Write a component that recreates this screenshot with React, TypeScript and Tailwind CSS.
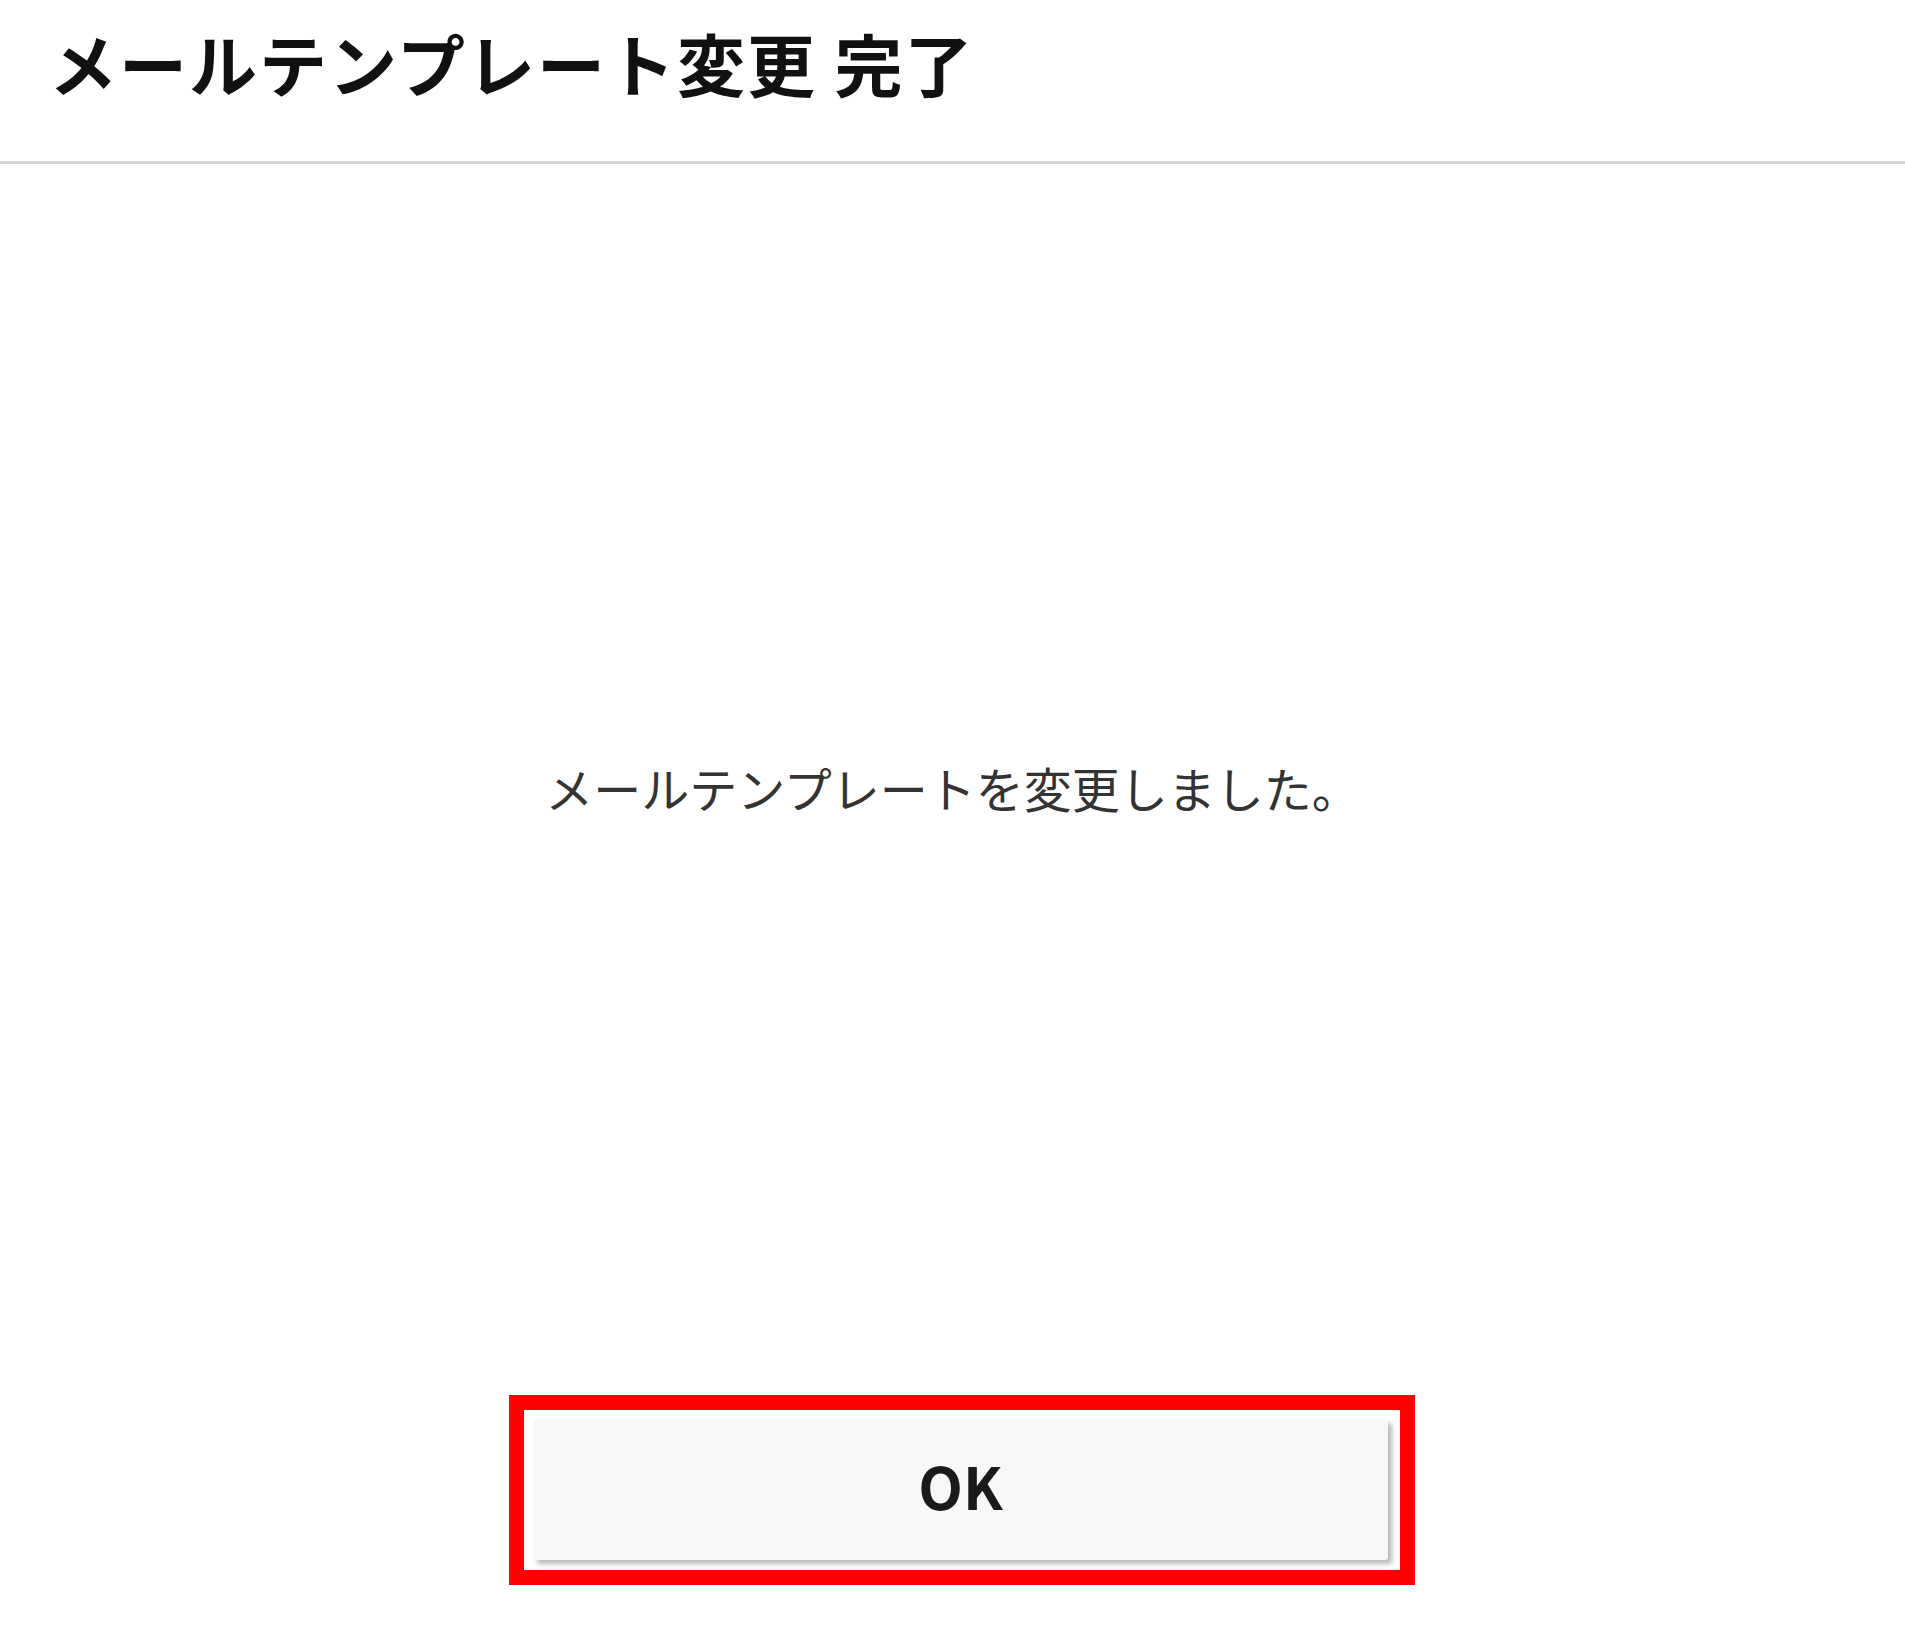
export default function App() {
  return (
    <div
      className="w-[1905px] h-[1625px] bg-white flex flex-col"
      style={{ fontFamily: '"Noto Sans CJK JP", "Noto Sans", sans-serif' }}
    >
      {/* Header */}
      <div className="h-[164px] border-b-[3px] border-[#d6d6d6] pl-[49px] pt-[29px]">
        <h1 className="text-[68px] leading-none font-bold text-[#111] tracking-[2px]">
          メールテンプレート変更 完了
        </h1>
      </div>

      {/* Message */}
      <div className="mt-[599px] text-center">
        <p className="text-[48px] leading-none text-[#333]">
          メールテンプレートを変更しました。
        </p>
      </div>

      {/* OK button (highlighted) */}
      <div className="mt-[584px] ml-[509px] w-[906px] h-[190px] border-[15px] border-[#ff0000] pl-[9px] pt-[9px]">
        <button className="w-[855px] h-[141px] pb-[10px] bg-[#f7f7f7] rounded-[3px] shadow-[4px_4px_5px_rgba(0,0,0,0.28)] text-[58px] font-bold text-[#1a1a1a] leading-none">
          OK
        </button>
      </div>
    </div>
  );
}
